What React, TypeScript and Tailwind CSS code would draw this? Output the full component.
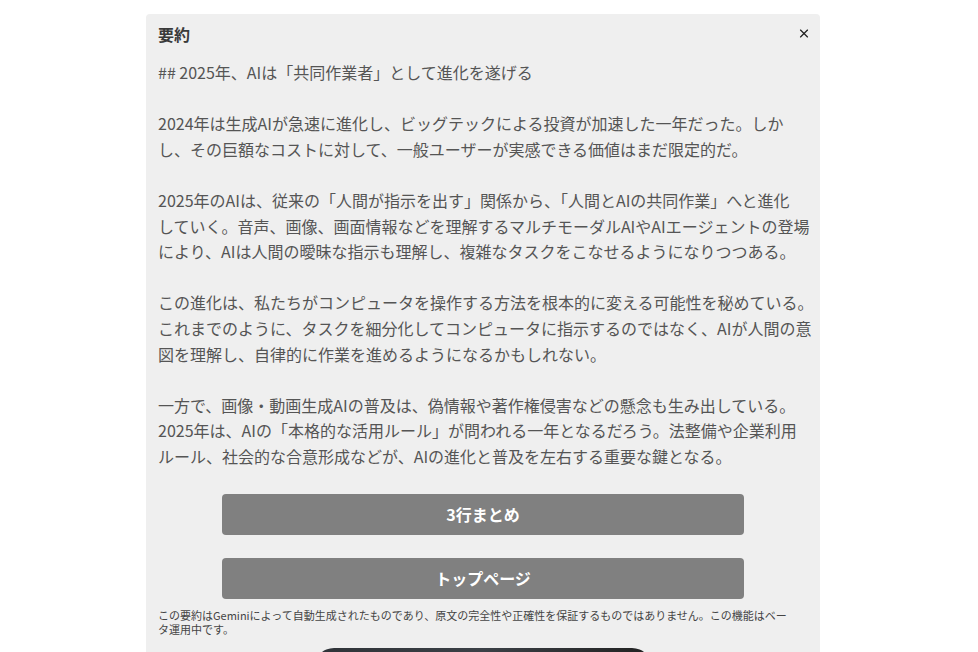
import { X } from "lucide-react";

const paragraphs: string[][] = [
  ["## 2025年、AIは「共同作業者」として進化を遂げる"],
  [
    "2024年は生成AIが急速に進化し、ビッグテックによる投資が加速した一年だった。しか",
    "し、その巨額なコストに対して、一般ユーザーが実感できる価値はまだ限定的だ。",
  ],
  [
    "2025年のAIは、従来の「人間が指示を出す」関係から、「人間とAIの共同作業」へと進化",
    "していく。音声、画像、画面情報などを理解するマルチモーダルAIやAIエージェントの登場",
    "により、AIは人間の曖昧な指示も理解し、複雑なタスクをこなせるようになりつつある。",
  ],
  [
    "この進化は、私たちがコンピュータを操作する方法を根本的に変える可能性を秘めている。",
    "これまでのように、タスクを細分化してコンピュータに指示するのではなく、AIが人間の意",
    "図を理解し、自律的に作業を進めるようになるかもしれない。",
  ],
  [
    "一方で、画像・動画生成AIの普及は、偽情報や著作権侵害などの懸念も生み出している。",
    "2025年は、AIの「本格的な活用ルール」が問われる一年となるだろう。法整備や企業利用",
    "ルール、社会的な合意形成などが、AIの進化と普及を左右する重要な鍵となる。",
  ],
];

export default function App() {
  return (
    <main
      className="h-[652px] overflow-hidden bg-white pl-[146px] pt-[14px]"
      style={{ fontFamily: '"Noto Sans CJK JP", "Noto Sans", sans-serif' }}
    >
      <section className="relative w-[674px] rounded-t-[4px] bg-[#efefef] px-[12px] pt-[8px] pb-4">
        <h2 className="text-base font-bold leading-[24px] text-[#3a3a3a]">要約</h2>
        <button className="absolute right-[9px] top-[12px] flex h-[14px] w-[14px] items-center justify-center text-[#222]">
          <X size={15} strokeWidth={2} />
        </button>

        <div className="mt-[14px] flex flex-col gap-[25.6px] text-base leading-[25.6px] text-[#555]">
          {paragraphs.map((p, i) => (
            <p key={i}>
              {p.map((line, j) => (
                <span key={j} className="block whitespace-nowrap">
                  {line}
                </span>
              ))}
            </p>
          ))}
        </div>

        <div className="mt-[24px] flex flex-col items-center gap-[23px]">
          <button className="h-[41px] w-[522px] rounded-[4px] bg-[#808080] text-base font-bold text-white">
            3行まとめ
          </button>
          <button className="h-[41px] w-[522px] rounded-[4px] bg-[#808080] text-base font-bold text-white">
            トップページ
          </button>
        </div>

        <p className="mt-[9px] text-[11px] leading-[14px] text-[#444]">
          この要約はGeminiによって自動生成されたものであり、原文の完全性や正確性を保証するものではありません。この機能はベー
          <br />
          タ運用中です。
        </p>

        <div className="mx-auto mt-[12px] h-[40px] w-[338px] rounded-[20px] bg-gradient-to-r from-[#2f3338] via-[#3b4046] to-[#222]" />
      </section>
    </main>
  );
}
